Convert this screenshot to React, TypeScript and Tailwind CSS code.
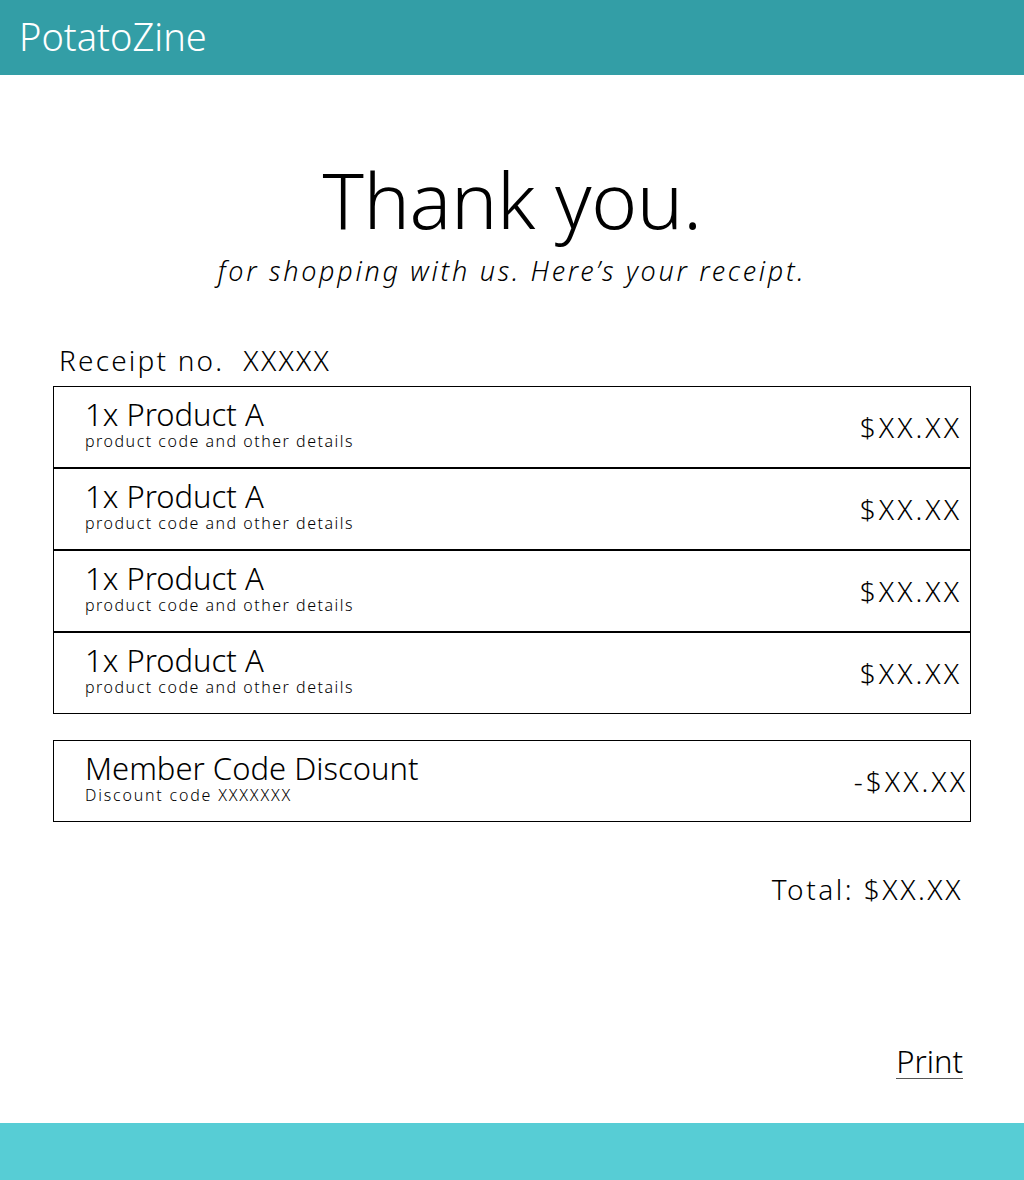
import React from "react";

const items = [1, 2, 3, 4];

export default function App() {
    return (
        <div className="min-h-[1180px] flex flex-col bg-white text-black font-['Noto_Sans',sans-serif] font-light">
            {/* header */}
            <header className="h-[75px] bg-[#339ea6] flex items-center px-[19px] pb-[3px]">
                <span className="text-[38px] text-white">PotatoZine</span>
            </header>

            <main className="flex-1 flex flex-col px-[53px] pb-[44px]">
                <div className="flex flex-col items-center pt-[85px]">
                    <h1 className="text-[78px] leading-none tracking-[-0.4px]">Thank you.</h1>
                    <p className="mt-[19px] text-[27px] leading-none italic tracking-[2.7px]">for shopping with us. Here’s your receipt.</p>
                </div>

                <div className="mt-[62px] pl-[6px] text-[28px] leading-none tracking-[2.2px]">Receipt no.{"\u00a0"} XXXXX</div>

                {/* items */}
                <div className="mt-[12px] flex flex-col">
                    {items.map((i) => (
                        <div key={i} className="h-[82px] border-[1.5px] border-black flex justify-between pl-[31px] pr-[8px] pt-[12px]">
                            <div className="flex flex-col">
                                <span className="text-[31px] leading-none">1x Product A</span>
                                <span className="mt-[3px] text-[16px] leading-none tracking-[1.5px]">product code and other details</span>
                            </div>
                            <span className="self-center -mt-[12px] text-[28px] leading-none tracking-[3px]">$XX.XX</span>
                        </div>
                    ))}
                </div>

                <div className="mt-[26px] h-[82px] border-[1.5px] border-black flex justify-between pl-[31px] pr-[2px] pt-[12px]">
                    <div className="flex flex-col">
                        <span className="text-[31px] leading-none">Member Code Discount</span>
                        <span className="mt-[3px] text-[16px] leading-none tracking-[1.8px]">Discount code XXXXXXX</span>
                    </div>
                    <span className="self-center -mt-[12px] text-[28px] leading-none tracking-[3px]">-$XX.XX</span>
                </div>

                <div className="mt-[53px] self-end pr-[8px] text-[28px] leading-none tracking-[2.5px]">Total: $XX.XX</div>

                <div className="mt-auto self-end pr-[8px]">
                    <button className="text-[31px] font-light leading-[34px] border-b border-[#555]">Print</button>
                </div>
            </main>

            <footer className="h-[57px] bg-[#57cdd5]" />
        </div>
    );
}
